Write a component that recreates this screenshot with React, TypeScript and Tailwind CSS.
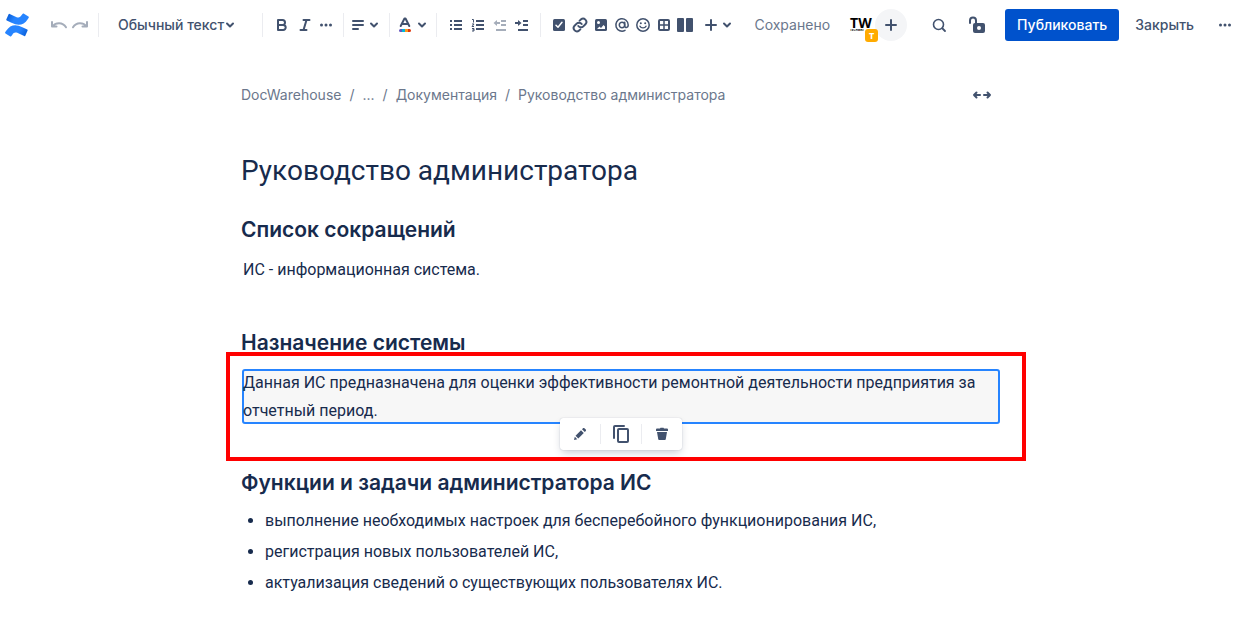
import type { ReactNode } from "react";

const ink = "#42526E";

function Icon({ size = 24, children }: { size?: number; children: ReactNode }) {
    return (
        <svg width={size} height={size} viewBox={`0 0 ${size} ${size}`} fill="none" className="shrink-0" aria-hidden="true">
            {children}
        </svg>
    );
}

function Tool({ label, className = "w-[21px]", children }: { label: string; className?: string; children: ReactNode }) {
    return (
        <button type="button" aria-label={label} className={`flex h-8 shrink-0 items-center justify-center ${className}`}>
            {children}
        </button>
    );
}

function Divider({ className = "h-6" }: { className?: string }) {
    return <span className={`w-px shrink-0 bg-[#ebecf0] ${className}`} />;
}

function Chevron() {
    return (
        <Icon size={10}>
            <path d="M2 3.5l3 3 3-3" stroke={ink} strokeWidth="2" strokeLinecap="round" strokeLinejoin="round" />
        </Icon>
    );
}

function Dots() {
    return (
        <Icon size={14}>
            <circle cx="2.5" cy="7" r="1.5" fill={ink} />
            <circle cx="7" cy="7" r="1.5" fill={ink} />
            <circle cx="11.5" cy="7" r="1.5" fill={ink} />
        </Icon>
    );
}

function Plus() {
    return (
        <Icon size={14}>
            <path d="M7 2v10M2 7h10" stroke={ink} strokeWidth="2" strokeLinecap="round" />
        </Icon>
    );
}

function Logo() {
    return (
        <svg width="24" height="24" viewBox="0 0 24 24" aria-hidden="true">
            <defs>
                <linearGradient id="wave-bottom" x1="23" y1="24" x2="8" y2="15" gradientUnits="userSpaceOnUse">
                    <stop offset="0" stopColor="#0052CC" />
                    <stop offset="0.6" stopColor="#2684FF" />
                </linearGradient>
                <linearGradient id="wave-top" x1="1" y1="0" x2="16" y2="9" gradientUnits="userSpaceOnUse">
                    <stop offset="0" stopColor="#0052CC" />
                    <stop offset="0.6" stopColor="#2684FF" />
                </linearGradient>
            </defs>
            <path d="M1 18.1l-.8 1.2a.8.8 0 0 0 .3 1.1l4.8 3a.8.8 0 0 0 1.1-.3l.8-1.2c1.9-3.1 3.8-2.7 7.2-1.1l4.8 2.3a.8.8 0 0 0 1.1-.4l2.3-5.2a.8.8 0 0 0-.4-1L17.4 14.2C11 11.1 5.5 11.2 1 18.1z" fill="url(#wave-bottom)" />
            <path d="M22.9 5.9l.8-1.2a.8.8 0 0 0-.3-1.1l-4.8-3a.8.8 0 0 0-1.1.3l-.8 1.2c-1.9 3.1-3.8 2.7-7.2 1.1L4.7.9a.8.8 0 0 0-1.1.4L1.3 6.5a.8.8 0 0 0 .4 1l4.8 2.3C13 12.9 18.5 12.8 22.9 5.9z" fill="url(#wave-top)" />
        </svg>
    );
}

function Toolbar() {
    return (
        <header className="flex h-[50px] items-center text-sm text-[#42526e]">
            <a href="#home" aria-label="Confluence" className="ml-[5px] mr-[19px] shrink-0">
                <Logo />
            </a>
            <Tool label="Отменить">
                <Icon size={18}>
                    <path d="M2 6v4.5h4.5M3 10c2.5-3.3 9.5-4.3 13 1.3" stroke="#A5ADBA" strokeWidth="2" strokeLinecap="round" strokeLinejoin="round" />
                </Icon>
            </Tool>
            <Tool label="Повторить">
                <Icon size={18}>
                    <path d="M16 6v4.5h-4.5M15 10C12.5 6.7 5.5 5.7 2 11.3" stroke="#A5ADBA" strokeWidth="2" strokeLinecap="round" strokeLinejoin="round" />
                </Icon>
            </Tool>
            <Divider className="ml-2 h-6" />
            <div className="ml-[19px] flex items-center">
                <select aria-label="Стиль текста" className="w-[107px] appearance-none bg-transparent font-medium outline-none">
                    <option>Обычный текст</option>
                </select>
                <Chevron />
            </div>
            <Divider className="ml-[27px] h-6" />

            <Tool label="Полужирный" className="ml-[7px] w-6">
                <Icon size={16}>
                    <path d="M4 3h4.5a2.5 2.5 0 0 1 0 5H4zM4 8h5.2a2.5 2.5 0 0 1 0 5H4z" stroke={ink} strokeWidth="2" strokeLinejoin="round" />
                </Icon>
            </Tool>
            <Tool label="Курсив">
                <Icon size={16}>
                    <path d="M6.5 3h6M3.5 13h6M9.5 3l-3 10" stroke={ink} strokeWidth="2" strokeLinecap="round" />
                </Icon>
            </Tool>
            <Tool label="Другое форматирование">
                <Dots />
            </Tool>
            <Divider className="ml-[7px] h-6" />

            <Tool label="Выравнивание" className="ml-[5px] w-8 gap-1">
                <Icon size={14}>
                    <path d="M2 3h10M2 7h10M2 11h5" stroke={ink} strokeWidth="2" strokeLinecap="round" />
                </Icon>
                <Chevron />
            </Tool>
            <Divider className="ml-2 h-6" />

            <Tool label="Цвет текста" className="ml-[6px] w-8 gap-1">
                <Icon size={16}>
                    <path d="M3.7 9L7.5 1.5h1L12.3 9M5.5 7h5" stroke={ink} strokeWidth="2" strokeLinecap="round" strokeLinejoin="round" />
                    <path d="M3.5 12H5v3H3.500a1.5 1.5 0 0 1 0-3z" fill="#6554C0" />
                    <path d="M5 12h3v3H5z" fill="#00B8D9" />
                    <path d="M8 12h3v3H8z" fill="#FF991F" />
                    <path d="M11 12h1.5a1.5 1.5 0 0 1 0 3H11z" fill="#DE350B" />
                </Icon>
                <Chevron />
            </Tool>
            <Divider className="ml-2 h-6" />

            <Tool label="Маркированный список" className="ml-2 w-[22px]">
                <Icon size={14}>
                    <path d="M1 3h2M1 7h2M1 11h2M5 3h8M5 7h8M5 11h8" stroke={ink} strokeWidth="2" />
                </Icon>
            </Tool>
            <Tool label="Нумерованный список" className="w-[22px]">
                <Icon size={14}>
                    <path d="M5 3h8M5 7h8M5 11h8" stroke={ink} strokeWidth="2" />
                    <path d="M1 1.5h1.5v3M1 6h2L1 8.5h2M1 10.5h2V13H1M1.5 11.8H3" stroke={ink} />
                </Icon>
            </Tool>
            <Tool label="Уменьшить отступ" className="w-[22px]">
                <Icon size={14}>
                    <path d="M8 3h5M8 7h5M3 12h10" stroke="#A5ADBA" strokeWidth="2" />
                    <path d="M7 5H2" stroke="#A5ADBA" strokeWidth="2" />
                    <path d="M4 2v6L.5 5z" fill="#A5ADBA" />
                </Icon>
            </Tool>
            <Tool label="Увеличить отступ" className="w-[22px]">
                <Icon size={14}>
                    <path d="M8 3h5M8 7h5M3 12h10" stroke={ink} strokeWidth="2" />
                    <path d="M0 5h5" stroke={ink} strokeWidth="2" />
                    <path d="M3 2v6l3.5-3z" fill={ink} />
                </Icon>
            </Tool>
            <Divider className="ml-[7px] h-6" />

            <Tool label="Задача" className="ml-[7px] w-[21px]">
                <Icon size={14}>
                    <rect x="1" y="1" width="12" height="12" rx="1.5" fill={ink} />
                    <path d="M4 7.3l2 2 4-5" stroke="#fff" strokeWidth="1.5" strokeLinecap="round" strokeLinejoin="round" />
                </Icon>
            </Tool>
            <Tool label="Ссылка">
                <svg width="16" height="16" viewBox="0 0 24 24" fill="none" stroke={ink} strokeWidth="3" strokeLinecap="round" strokeLinejoin="round" aria-hidden="true">
                    <path d="M9.5 13.5a5 5 0 0 0 7.5.5l3.5-3.5a5 5 0 0 0-7-7L11.5 5.5" />
                    <path d="M14.5 10.5a5 5 0 0 0-7.5-.5l-3.5 3.5a5 5 0 0 0 7 7l2-2" />
                </svg>
            </Tool>
            <Tool label="Изображение">
                <Icon size={14}>
                    <rect x="1" y="1" width="12" height="12" rx="1.5" fill={ink} />
                    <circle cx="4.5" cy="4.5" r="1.5" fill="#fff" />
                    <path d="M3 11l2.5-2.5L7 10l2.5-3L11 8.5V11z" fill="#fff" />
                </Icon>
            </Tool>
            <Tool label="Упоминание">
                <Icon size={16}>
                    <circle cx="8" cy="8" r="2.7" stroke={ink} strokeWidth="1.5" />
                    <path d="M10.7 5.2v3.600c0 2.300 3.500 2.300 3.500-.8A6.200 6.200 0 1 0 11 13.400" stroke={ink} strokeWidth="1.5" strokeLinecap="round" />
                </Icon>
            </Tool>
            <Tool label="Эмодзи">
                <Icon size={16}>
                    <circle cx="8" cy="8" r="6.2" stroke={ink} strokeWidth="1.5" />
                    <circle cx="5.8" cy="6.2" r="1" fill={ink} />
                    <circle cx="10.2" cy="6.2" r="1" fill={ink} />
                    <path d="M5 9.2c1 2.2 5 2.2 6 0" stroke={ink} strokeWidth="1.4" strokeLinecap="round" />
                </Icon>
            </Tool>
            <Tool label="Таблица">
                <Icon size={14}>
                    <rect x="2" y="2" width="10" height="10" rx="1" stroke={ink} strokeWidth="2" />
                    <path d="M7 2v10M2 7h10" stroke={ink} strokeWidth="1.5" />
                </Icon>
            </Tool>
            <Tool label="Макеты">
                <Icon size={16}>
                    <rect x="0" y="1" width="7" height="14" rx="1" fill={ink} />
                    <rect x="9" y="1" width="7" height="14" rx="1" fill={ink} />
                </Icon>
            </Tool>
            <Tool label="Вставить" className="ml-2 w-[30px] gap-1">
                <Plus />
                <Chevron />
            </Tool>

            <div className="ml-auto flex shrink-0 items-center">
                <span className="text-[#6b778c]">Сохранено</span>
                <div className="relative ml-[18px] h-8 w-[30px] pt-2 pl-[2px] font-[Open_Sans,sans-serif] text-black">
                    <span className="block text-sm leading-3 font-bold">TW</span>
                    <span className="block w-[14px] overflow-hidden text-[3px] leading-[3px] font-bold">TECHWRITE</span>
                    <span className="absolute right-0 -bottom-px flex size-[13px] items-center justify-center rounded-[3px] bg-[#ffab00] text-[9px] leading-[9px] font-bold text-white">
                        T
                    </span>
                </div>
                <button type="button" aria-label="Пригласить" className="-ml-[3px] flex size-8 items-center justify-center rounded-full bg-[#f4f5f7]">
                    <Plus />
                </button>
                <Tool label="Поиск" className="ml-5 w-6">
                    <Icon size={16}>
                        <circle cx="7.5" cy="7.5" r="5" stroke={ink} strokeWidth="1.6" />
                        <path d="M11.5 11.5l2.5 2.5" stroke={ink} strokeWidth="1.8" strokeLinecap="round" />
                    </Icon>
                </Tool>
                <Tool label="Ограничения" className="ml-[14px] w-6">
                    <Icon size={18}>
                        <path d="M2 7V4.5a3 3 0 0 1 6 0V8" stroke={ink} strokeWidth="2" strokeLinecap="round" />
                        <rect x="5" y="7" width="12" height="10" rx="2" fill={ink} />
                        <circle cx="11" cy="12" r="2" fill="#fff" />
                    </Icon>
                </Tool>
                <button type="button" className="ml-4 h-8 rounded-[3px] bg-[#0052cc] px-3 font-medium text-white">
                    Публиковать
                </button>
                <button type="button" className="ml-4 h-8 font-medium">
                    Закрыть
                </button>
                <Tool label="Ещё" className="mr-[7px] ml-6">
                    <Dots />
                </Tool>
            </div>
        </header>
    );
}

const crumbs = ["DocWarehouse", "...", "Документация", "Руководство администратора"];

function Breadcrumbs() {
    return (
        <div className="flex h-5 items-center justify-between text-sm text-[#6b778c]">
            <nav aria-label="Путь">
                <ol className="flex">
                    {crumbs.map((crumb, index) => (
                        <li key={crumb} className="flex">
                            {index > 0 && <span className="px-2">/</span>}
                            <a href="#page">{crumb}</a>
                        </li>
                    ))}
                </ol>
            </nav>
            <Tool label="Ширина страницы" className="mr-1 w-6">
                <Icon size={20}>
                    <path d="M8 10H2M4.5 7.5L2 10l2.5 2.5M12 10h6M15.5 7.5L18 10l-2.5 2.5" stroke={ink} strokeWidth="2" strokeLinecap="round" strokeLinejoin="round" />
                </Icon>
            </Tool>
        </div>
    );
}

function SectionTitle({ className, children }: { className: string; children: ReactNode }) {
    return <h2 className={`font-[Inter,sans-serif] text-[21px] leading-7 font-semibold ${className}`}>{children}</h2>;
}

function MacroToolbar() {
    return (
        <div className="absolute top-[47px] left-1/2 flex h-8 -translate-x-1/2 items-center rounded-[3px] bg-white shadow-[0_0_1px_rgba(9,30,66,0.31),0_4px_8px_-2px_rgba(9,30,66,0.25)]">
            <Tool label="Редактировать" className="w-10">
                <Icon size={14}>
                    <path d="M1 13l.8-3.3 2.5 2.5zM2.500 8.7L8 3.2 10.8 6l-5.500 5.500zM9 2.2l1-1c.4-.4 1-.4 1.400 0l1.400 1.400c.4.4.4 1 0 1.400l-1 1z" fill={ink} />
                </Icon>
            </Tool>
            <Divider className="h-5" />
            <Tool label="Копировать" className="w-10">
                <Icon size={20}>
                    <path d="M3 14V3a1 1 0 0 1 1-1h9" stroke={ink} strokeWidth="2" strokeLinecap="round" />
                    <rect x="7" y="5" width="10" height="13" rx="1" stroke={ink} strokeWidth="2" />
                </Icon>
            </Tool>
            <Divider className="h-5" />
            <Tool label="Удалить" className="w-10">
                <Icon size={14}>
                    <path d="M1 2.5a1 1 0 0 1 1-1h3l.5-.7h3l.5.7h3a1 1 0 0 1 1 1V4H1zM2 5h10l-1.2 7a1 1 0 0 1-1 1H4.2a1 1 0 0 1-1-1z" fill={ink} />
                </Icon>
            </Tool>
        </div>
    );
}

const duties = [
    "выполнение необходимых настроек для бесперебойного функционирования ИС,",
    "регистрация новых пользователей ИС,",
    "актуализация сведений о существующих пользователях ИС.",
];

export default function App() {
    return (
        <div className="min-h-screen bg-white font-[Inter,Roboto,sans-serif] text-[#172b4d]">
            <Toolbar />
            <main className="mx-auto mt-[35px] max-w-[757px]">
                <Breadcrumbs />
                <article className="font-[Roboto,sans-serif] text-base leading-7">
                    <h1 className="mt-[46px] text-[28px] leading-10">Руководство администратора</h1>

                    <SectionTitle className="mt-[25px]">Список сокращений</SectionTitle>
                    <p className="mt-3 px-[2px]">ИС - информационная система.</p>

                    <SectionTitle className="mt-[45px]">Назначение системы</SectionTitle>
                    <div className="relative mt-3 -mr-[2px] ml-px rounded-[3px] border-2 border-[#2684ff] bg-[#f7f7f7]">
                        <p className="-mt-[2px] -mb-[3px] -ml-px">
                            Данная ИС предназначена для оценки эффективности ремонтной деятельности предприятия за отчетный период.
                        </p>
                        <div className="pointer-events-none absolute -top-[19px] -right-[28px] -bottom-[39px] -left-[18px] border-4 border-[#ff0000]" />
                        <MacroToolbar />
                    </div>

                    <SectionTitle className="mt-[45px]">Функции и задачи администратора ИС</SectionTitle>
                    <ul className="mt-[10px] list-disc space-y-[3px] pl-6">
                        {duties.map((duty) => (
                            <li key={duty}>{duty}</li>
                        ))}
                    </ul>
                </article>
            </main>
        </div>
    );
}
